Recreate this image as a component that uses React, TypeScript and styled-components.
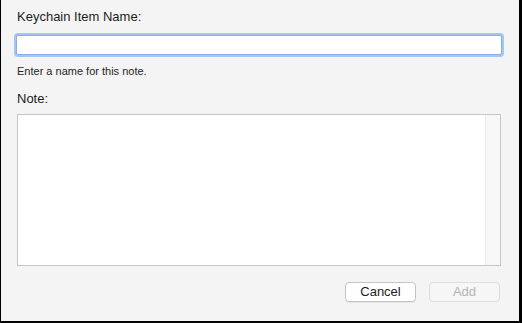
import React, { useState } from 'react'
import styled, { createGlobalStyle } from 'styled-components'

const GlobalStyle = createGlobalStyle`
  html, body {
    margin: 0;
    padding: 0;
    background: #000;
  }
  body {
    font-family: "Liberation Sans", Arial, sans-serif;
  }
`

const Sheet = styled.div`
  box-sizing: border-box;
  width: 518px;
  height: 321px;
  margin-left: 1px;
  background: #f4f4f4;
  padding: 9px 17px 0 15px;
  display: flex;
  flex-direction: column;
`

const Label = styled.label`
  font-size: 13px;
  line-height: 16px;
  color: #1c1c1c;
  padding-left: 1px;
`

const NameInput = styled.input`
  box-sizing: border-box;
  width: 100%;
  height: 20px;
  margin: 10px 0 0;
  border: 1px solid #86aee8;
  border-radius: 2px;
  box-shadow: 0 0 0 2px #a3c6f2;
  background: #fff;
  font-family: inherit;
  font-size: 13px;
  padding: 0 4px;
  &:focus {
    outline: none;
  }
`

const Hint = styled.div`
  font-size: 11px;
  line-height: 14px;
  color: #262626;
  margin-top: 9px;
  padding-left: 1px;
`

const NoteLabel = styled(Label)`
  margin-top: 13px;
`

const NoteBox = styled.div`
  box-sizing: border-box;
  height: 152px;
  margin: 7px 1px 0;
  border: 1px solid #c6c6c6;
  background: #fff;
  display: flex;
`

const NoteArea = styled.textarea`
  flex: 1;
  border: none;
  resize: none;
  font-family: inherit;
  font-size: 13px;
  padding: 3px 4px;
  background: transparent;
  &:focus {
    outline: none;
  }
`

const ScrollTrack = styled.div`
  width: 14px;
  background: #f8f8f8;
  border-left: 1px solid #ebebeb;
`

const ButtonRow = styled.div`
  display: flex;
  justify-content: flex-end;
  gap: 13px;
  margin-top: 16px;
  padding-right: 2px;
`

const Button = styled.button<{ $disabled?: boolean }>`
  box-sizing: border-box;
  width: 71px;
  height: 20px;
  border-radius: 4px;
  border: 1px solid ${p => (p.$disabled ? '#dddddd' : '#c4c4c4')};
  background: ${p => (p.$disabled ? '#f6f6f6' : '#ffffff')};
  color: ${p => (p.$disabled ? '#b4b4b4' : '#1a1a1a')};
  box-shadow: ${p => (p.$disabled ? 'none' : '0 1px 0 rgba(0,0,0,0.06)')};
  font-family: inherit;
  font-size: 13px;
  line-height: 18px;
  padding: 0;
  cursor: ${p => (p.$disabled ? 'default' : 'pointer')};
`

function App() {
    const [name, setName] = useState<string>('')
    const [note, setNote] = useState<string>('')

    return (
        <>
            <GlobalStyle />
            <Sheet>
                <Label>Keychain Item Name:</Label>
                <NameInput
                    type="text"
                    value={name}
                    onChange={(event: React.ChangeEvent<HTMLInputElement>) => setName(event.target.value)}
                />
                <Hint>Enter a name for this note.</Hint>
                <NoteLabel>Note:</NoteLabel>
                <NoteBox>
                    <NoteArea
                        value={note}
                        onChange={(event: React.ChangeEvent<HTMLTextAreaElement>) => setNote(event.target.value)}
                    />
                    <ScrollTrack />
                </NoteBox>
                <ButtonRow>
                    <Button>Cancel</Button>
                    <Button $disabled={name === ''}>Add</Button>
                </ButtonRow>
            </Sheet>
        </>
    )
}

export default App
